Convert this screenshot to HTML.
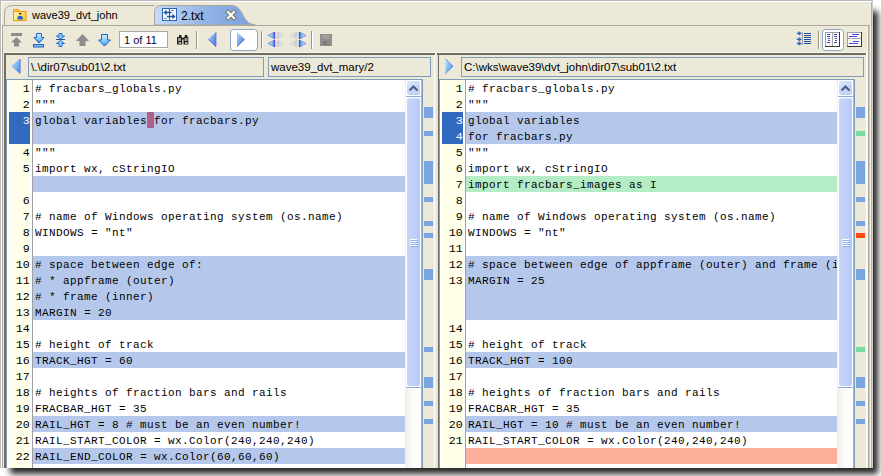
<!DOCTYPE html>
<html><head><meta charset="utf-8">
<style>
html,body{margin:0;padding:0;}
body{width:881px;height:476px;overflow:hidden;background:#fff;position:relative;font-family:"Liberation Sans",sans-serif;}
div{position:absolute;box-sizing:border-box;}
#clip{left:0;top:0;width:873px;height:468px;overflow:hidden;background:#ECE9D8;}
.code{font-family:"Liberation Mono",monospace;font-size:11px;letter-spacing:0.4px;line-height:18.5px;height:16px;white-space:pre;color:#000;width:370px;overflow:hidden;}
.ln{font-family:"Liberation Mono",monospace;font-size:11.667px;line-height:18px;height:16px;width:21px;text-align:right;white-space:pre;}
.fld{border:1px solid #7F9DB9;background:#ECE9D8;font-size:11.5px;color:#000;}
.tabt{font-size:11px;white-space:pre;color:#000;}
.cnt{border:1px solid #A8A8A8;box-shadow:0 1px 0 #fff;background:#fff;font-size:11px;color:#000040;}
.cnt span{position:absolute;left:4px;top:1.5px;white-space:pre;}
.fld span{position:absolute;left:2px;top:3px;white-space:pre;}
</style></head><body>
<div style="left:10px;top:11px;width:868px;height:463px;background:rgba(0,0,0,0.85);filter:blur(3px)"></div>
<div id="clip">
<div style="left:0px;top:0px;width:873px;height:1px;background:#B9B9B9"></div><div style="left:0px;top:0px;width:1px;height:468px;background:#B9B9B9"></div><div style="left:1px;top:1px;width:872px;height:1px;background:#fff"></div><div style="left:1px;top:1px;width:1px;height:467px;background:#fff"></div><div style="left:2px;top:26px;width:1px;height:442px;background:#ACA899"></div><div style="left:868px;top:26px;width:1px;height:442px;background:#ACA899"></div><div style="left:871px;top:2px;width:1px;height:466px;background:#B4B2A8"></div><div style="left:872px;top:1px;width:1px;height:467px;background:#CFCFCF"></div><div style="left:867px;top:26px;width:1px;height:442px;background:#F8F8F4"></div><div style="left:869px;top:26px;width:1px;height:442px;background:#CFCBBB"></div><div style="left:870px;top:26px;width:1px;height:442px;background:#F5F1DE"></div><svg style="position:absolute;left:0;top:0" width="300" height="27">
<defs><linearGradient id="tg" x1="0" y1="0" x2="1" y2="0"><stop offset="0" stop-color="#C6DBF7"/><stop offset="0.55" stop-color="#8FB1E6"/><stop offset="1" stop-color="#79A0E0"/></linearGradient></defs>
<path d="M4.5 25.5 L4.5 13.5 Q4.5 5.5 12.5 5.5 L154.5 5.5" fill="none" stroke="#ACA899" stroke-width="1"/>
<path d="M154.5 25 L154.5 12 Q154.5 5.5 161 5.5 L231 5.5 C237 5.5 239.5 9 242.5 14 C245.5 20 248 24.5 255 24.5 L255 25 Z" fill="url(#tg)" stroke="#ACA899" stroke-width="1"/>
</svg><div style="left:2px;top:25px;width:868px;height:1px;background:#ACA899"></div><div class="tabt" style="left:32px;top:9px">wave39_dvt_john</div><div class="tabt" style="left:181px;top:9px;font-size:12px">2.txt</div><svg style="position:absolute;left:13px;top:9px" width="15" height="13">
<defs><linearGradient id="fg" x1="0" y1="0" x2="1" y2="0.3"><stop offset="0" stop-color="#FFF6C0"/><stop offset="1" stop-color="#FFD03A"/></linearGradient></defs>
<path d="M0.5 0.5 H5.5 L6.5 2 V2.5 H0.5 Z" fill="#FFD860" stroke="#F39A0B" stroke-width="1"/>
<rect x="0.5" y="2.5" width="12.5" height="9" fill="url(#fg)" stroke="#F39A0B" stroke-width="1"/>
<rect x="6" y="4" width="2.2" height="1.6" fill="#1A1A1A"/><rect x="6" y="5.4" width="2.2" height="1.4" fill="#F4C4B4"/>
<path d="M4.5 10.5 V8.5 Q4.5 7 6 7 H8.2 Q9.8 7 9.8 8.5 V10.5 Z" fill="#2464C8"/>
</svg><svg style="position:absolute;left:162px;top:8px" width="15" height="13">
<rect x="0.5" y="0.5" width="14" height="12" fill="#F4F8FF" stroke="#2E64B0" stroke-width="1"/>
<line x1="7.5" y1="0.5" x2="7.5" y2="12.5" stroke="#2E64B0" stroke-width="1"/>
<line x1="9" y1="2.5" x2="12" y2="2.5" stroke="#6A8CC4"/><line x1="2" y1="10.5" x2="5" y2="10.5" stroke="#6A8CC4"/>
<path d="M2.5 4.5 L9.5 4.5" stroke="#1E4D9A" stroke-width="1.5"/><path d="M1.5 4.5 L4.5 1.8 L4.5 7.2 Z" fill="#1E4D9A"/>
<path d="M5 8.5 L12 8.5" stroke="#1E4D9A" stroke-width="1.5"/><path d="M13.5 8.5 L10.5 5.8 L10.5 11.2 Z" fill="#1E4D9A"/>
</svg><svg style="position:absolute;left:225px;top:9px" width="12" height="12">
<path d="M3 3 L9 9 M9 3 L3 9" stroke="#6B6456" stroke-width="3.9" stroke-linecap="square"/>
<path d="M3 3 L9 9 M9 3 L3 9" stroke="#fff" stroke-width="2.3" stroke-linecap="square"/>
</svg>
<div style="left:3px;top:52px;width:865px;height:1px;background:#F6F4EA"></div><div style="left:196px;top:31px;width:1px;height:18px;background:#979488"></div><div style="left:197px;top:31px;width:1px;height:18px;background:#fff"></div><div style="left:261px;top:31px;width:1px;height:18px;background:#979488"></div><div style="left:262px;top:31px;width:1px;height:18px;background:#fff"></div><div style="left:311px;top:31px;width:1px;height:18px;background:#979488"></div><div style="left:312px;top:31px;width:1px;height:18px;background:#fff"></div><div style="left:818px;top:31px;width:1px;height:18px;background:#979488"></div><div style="left:819px;top:31px;width:1px;height:18px;background:#fff"></div>
<svg style="position:absolute;left:0;top:26px" width="881" height="27">
<defs>
<linearGradient id="bl" x1="0" y1="0" x2="0" y2="1"><stop offset="0" stop-color="#D2EEFF"/><stop offset="0.6" stop-color="#80C8FF"/><stop offset="1" stop-color="#2E8CF0"/></linearGradient>
<linearGradient id="tri" x1="0" y1="0" x2="1" y2="1"><stop offset="0" stop-color="#B8DAFB"/><stop offset="1" stop-color="#3A70DA"/></linearGradient>
<linearGradient id="gr" x1="0" y1="0" x2="0" y2="1"><stop offset="0" stop-color="#A8A8A8"/><stop offset="1" stop-color="#808080"/></linearGradient>
</defs>
<!-- icon1 gray to top -->
<rect x="11" y="7" width="11" height="3" fill="#8C8C8C"/>
<path d="M16.5 11 L22 16.5 L19 16.5 L19 20.5 L14 20.5 L14 16.5 L11 16.5 Z" fill="#8C8C8C"/>
<!-- icon2 blue to bottom -->
<path d="M36.5 7.5 L41.5 7.5 L41.5 11.5 L44 11.5 L39 17 L34 11.5 L36.5 11.5 Z" fill="url(#bl)" stroke="#2262C2" stroke-width="1" stroke-linejoin="miter"/>
<rect x="33.5" y="18.5" width="10" height="2.5" fill="#7CC0FF" stroke="#2262C2" stroke-width="1"/>
<!-- icon3 collapse -->
<path d="M59 7.5 H62 V10 H64.5 L60.5 13 L56.5 10 H59 Z" fill="#86CBFF" stroke="#1F6FD8" stroke-width="1"/>
<line x1="56" y1="13.5" x2="65" y2="13.5" stroke="#1F4F96" stroke-width="1"/>
<path d="M60.5 14.5 L64.5 17.5 H62 V20.5 H59 V17.5 H56.5 Z" fill="#86CBFF" stroke="#1F6FD8" stroke-width="1"/>
<!-- icon4 gray up -->
<path d="M82.5 8 L89 15 L85.5 15 L85.5 20 L79.5 20 L79.5 15 L76 15 Z" fill="#8C8C8C"/>
<!-- icon5 blue down -->
<path d="M101.5 8.5 L107.5 8.5 L107.5 14 L110.5 14 L104.5 20 L98.5 14 L101.5 14 Z" fill="url(#bl)" stroke="#2262C2" stroke-width="1" stroke-linejoin="miter"/>
<!-- binoculars -->
<rect x="177" y="11" width="5.2" height="7.5" fill="#1E1E1E"/><rect x="179" y="9" width="2.5" height="3" fill="#1E1E1E"/>
<rect x="183.5" y="11" width="4.8" height="7.5" fill="#1E1E1E"/><rect x="184.8" y="9" width="2.5" height="3" fill="#1E1E1E"/>
<rect x="182" y="12" width="2" height="1.5" fill="#1E1E1E"/>
<rect x="178" y="12" width="3" height="3" fill="#9A9A9A"/><rect x="178.5" y="16" width="2.5" height="2" fill="#A8A8A8"/>
<rect x="184.5" y="12" width="3" height="3" fill="#9A9A9A"/><rect x="185" y="16" width="2.5" height="2" fill="#A8A8A8"/>
<!-- prev -->
<path d="M216 6 L208 13.5 L216 21 Z" fill="url(#tri)"/><path d="M216 6.5 V20.5 L208.5 13.5" fill="none" stroke="#6A68E0" stroke-width="0.8"/>
<!-- next button -->
<rect x="230.5" y="3.5" width="27" height="21" rx="3" fill="#fff" stroke="#8EA6C0" stroke-width="1"/>
<path d="M237 6 L245 13.5 L237 21 Z" fill="url(#tri)"/><path d="M237 20.5 L244.5 13.5" fill="none" stroke="#6A68E0" stroke-width="0.8"/>
<!-- copy left/right -->
<defs>
<linearGradient id="tl" x1="0" y1="0" x2="1" y2="0"><stop offset="0" stop-color="#C8F0FF"/><stop offset="0.6" stop-color="#7CCBF8"/><stop offset="1" stop-color="#2C78E0"/></linearGradient>
<linearGradient id="tr" x1="1" y1="0" x2="0" y2="0"><stop offset="0" stop-color="#C8F0FF"/><stop offset="0.6" stop-color="#7CCBF8"/><stop offset="1" stop-color="#2C78E0"/></linearGradient>
<linearGradient id="gl" x1="0" y1="0" x2="1" y2="0"><stop offset="0" stop-color="#F4F4F4"/><stop offset="1" stop-color="#C8C8C8"/></linearGradient>
<linearGradient id="gr2" x1="1" y1="0" x2="0" y2="0"><stop offset="0" stop-color="#F4F4F4"/><stop offset="1" stop-color="#C8C8C8"/></linearGradient>
</defs>
<g stroke-width="0.7" stroke-linejoin="round">
<path d="M274.8 6 L268 9.45 L274.8 12.9 Z M274.8 14 L268 17.5 L274.8 21 Z" fill="url(#tl)" stroke="#6A6AE8"/>
<path d="M274.3 6 V12.9 M274.3 14 V21" stroke="#5048D8" stroke-width="1"/>
<path d="M277.2 6 L284 9.45 L277.2 12.9 Z M277.2 14 L284 17.5 L277.2 21 Z" fill="url(#gr2)" stroke="#CACACA"/>
<path d="M296.8 6 L290 9.45 L296.8 12.9 Z M296.8 14 L290 17.5 L296.8 21 Z" fill="url(#gl)" stroke="#CACACA"/>
<path d="M299.2 6 L306 9.45 L299.2 12.9 Z M299.2 14 L306 17.5 L299.2 21 Z" fill="url(#tr)" stroke="#6A6AE8"/>
<path d="M299.7 6 V12.9 M299.7 14 V21" stroke="#5048D8" stroke-width="1"/>
</g>
<!-- floppy -->
<rect x="320" y="8" width="12" height="12" fill="#8E8E8E"/>
<rect x="322" y="9" width="8" height="4" fill="#9E9E9E"/>
<rect x="323" y="15" width="6" height="4" fill="#7A7A7A"/><rect x="327" y="16" width="1.5" height="2" fill="#9A9A9A"/>
<!-- line numbers icon -->
<line x1="802.5" y1="6" x2="802.5" y2="19" stroke="#A0A0A0"/>
<g stroke="#1F4F96" stroke-width="1"><line x1="804" y1="7.5" x2="811" y2="7.5"/><line x1="804" y1="9.5" x2="811" y2="9.5"/><line x1="804" y1="11.5" x2="811" y2="11.5"/><line x1="804" y1="13.5" x2="811" y2="13.5"/><line x1="804" y1="15.5" x2="811" y2="15.5"/><line x1="804" y1="17.5" x2="811" y2="17.5"/></g>
<g fill="#2A6CC4"><rect x="796.8" y="6.65" width="4.6" height="1.5"/><rect x="798.6" y="5.60" width="1.6" height="3.6"/><rect x="796.8" y="12.55" width="4.6" height="1.5"/><rect x="798.6" y="11.50" width="1.6" height="3.6"/><rect x="796.8" y="16.75" width="4.6" height="1.5"/><rect x="798.6" y="15.70" width="1.6" height="3.6"/></g>
<!-- side by side button -->
<rect x="822.5" y="3.5" width="21" height="21" rx="3" fill="#fff" stroke="#8EA6C0" stroke-width="1"/>
<rect x="825" y="6" width="15" height="15" fill="#FAFAFA"/>
<rect x="825" y="6" width="15" height="1" fill="#A0A0A0"/><rect x="825" y="6" width="1" height="15" fill="#A0A0A0"/>
<rect x="839" y="6" width="1" height="15" fill="#383838"/><rect x="825" y="20" width="15" height="1" fill="#383838"/>
<rect x="832" y="7" width="1" height="13" fill="#A8A8A8"/>
<g fill="#4848D8"><rect x="827" y="8" width="3" height="1"/><rect x="827" y="10" width="3" height="1"/><rect x="828" y="12" width="2" height="1"/><rect x="828" y="14" width="2" height="1"/><rect x="827" y="16" width="3" height="1"/>
<rect x="834" y="8" width="3" height="1"/><rect x="834" y="10" width="3" height="1"/><rect x="835" y="12" width="2" height="1"/><rect x="835" y="14" width="2" height="1"/><rect x="834" y="16" width="3" height="1"/></g>
<!-- over under -->
<rect x="847" y="6" width="15" height="15" fill="#FAFAFA"/>
<rect x="847" y="6" width="15" height="1" fill="#A0A0A0"/><rect x="847" y="6" width="1" height="15" fill="#A0A0A0"/>
<rect x="861" y="6" width="1" height="15" fill="#383838"/><rect x="847" y="20" width="15" height="1" fill="#383838"/>
<rect x="848" y="12" width="13" height="1" fill="#A8A8A8"/>
<g fill="#4848D8"><rect x="852" y="8" width="7" height="1"/><rect x="849" y="10" width="8" height="1"/><rect x="853" y="15" width="6" height="1"/><rect x="849" y="17" width="9" height="1"/></g>
</svg><div class="cnt" style="left:119px;top:31px;width:49px;height:17px"><span>1 of 11</span></div>
<div style="left:4px;top:53px;width:431px;height:2px;background:#716F64"></div>
<div style="left:5px;top:53px;width:1px;height:420px;background:#716F64"></div>
<div style="left:4px;top:53px;width:1px;height:420px;background:#716F64"></div>
<svg style="position:absolute;left:11px;top:58px" width="11" height="17"><defs><linearGradient id="ga" x1="0" y1="0" x2="1" y2="1"><stop offset="0" stop-color="#C0E6FF"/><stop offset="0.5" stop-color="#7CBDF4"/><stop offset="1" stop-color="#2E7EE0"/></linearGradient></defs><path d="M9 1 L1 8.3 L9 15.6 Z" fill="url(#ga)" stroke="#7A9CE8" stroke-width="0.6"/><path d="M9 1.2 V15.4" stroke="#6A68E0" stroke-width="0.8"/></svg><div class="fld" style="left:28px;top:57px;width:236px;height:20px"><span>\.\dir07\sub01\2.txt</span></div><div class="fld" style="left:268px;top:57px;width:163px;height:20px"><span>wave39_dvt_mary/2</span></div>
<div style="left:6px;top:79px;width:417px;height:1px;background:#7F9DB9"></div>
<div style="left:6px;top:79px;width:1px;height:400px;background:#7F9DB9"></div>
<div style="left:422px;top:79px;width:1px;height:400px;background:#7F9DB9"></div>
<div style="left:7px;top:80px;width:415px;height:400px;background:#fff"></div>
<div style="left:9px;top:80px;width:21px;height:400px;background:#FFFEE8"></div>
<div style="left:32px;top:80px;width:1px;height:400px;background:#A0A0A0"></div>
<div class="ln" style="left:8.7px;top:80px;color:#000">1</div>
<div class="code" style="left:35px;top:80px"># fracbars_globals.py</div>
<div class="ln" style="left:8.7px;top:96px;color:#000">2</div>
<div class="code" style="left:35px;top:96px">&quot;&quot;&quot;</div>
<div style="left:33px;top:112px;width:372px;height:16px;background:#B5C8EC"></div>
<div style="left:9px;top:112px;width:21px;height:16px;background:#316ABF"></div>
<div style="left:147px;top:112px;width:7px;height:16px;background:#B06084"></div>
<div class="ln" style="left:8.7px;top:112px;color:#fff">3</div>
<div class="code" style="left:35px;top:112px">global variables for fracbars.py</div>
<div style="left:33px;top:128px;width:372px;height:16px;background:#B5C8EC"></div>
<div style="left:9px;top:128px;width:21px;height:16px;background:#316ABF"></div>
<div class="ln" style="left:8.7px;top:144px;color:#000">4</div>
<div class="code" style="left:35px;top:144px">&quot;&quot;&quot;</div>
<div class="ln" style="left:8.7px;top:160px;color:#000">5</div>
<div class="code" style="left:35px;top:160px">import wx, cStringIO</div>
<div style="left:33px;top:176px;width:372px;height:16px;background:#B5C8EC"></div>
<div class="ln" style="left:8.7px;top:192px;color:#000">6</div>
<div class="ln" style="left:8.7px;top:208px;color:#000">7</div>
<div class="code" style="left:35px;top:208px"># name of Windows operating system (os.name)</div>
<div class="ln" style="left:8.7px;top:224px;color:#000">8</div>
<div class="code" style="left:35px;top:224px">WINDOWS = &quot;nt&quot;</div>
<div class="ln" style="left:8.7px;top:240px;color:#000">9</div>
<div style="left:33px;top:256px;width:372px;height:16px;background:#B5C8EC"></div>
<div class="ln" style="left:8.7px;top:256px;color:#000">10</div>
<div class="code" style="left:35px;top:256px"># space between edge of:</div>
<div style="left:33px;top:272px;width:372px;height:16px;background:#B5C8EC"></div>
<div class="ln" style="left:8.7px;top:272px;color:#000">11</div>
<div class="code" style="left:35px;top:272px"># * appframe (outer)</div>
<div style="left:33px;top:288px;width:372px;height:16px;background:#B5C8EC"></div>
<div class="ln" style="left:8.7px;top:288px;color:#000">12</div>
<div class="code" style="left:35px;top:288px"># * frame (inner)</div>
<div style="left:33px;top:304px;width:372px;height:16px;background:#B5C8EC"></div>
<div class="ln" style="left:8.7px;top:304px;color:#000">13</div>
<div class="code" style="left:35px;top:304px">MARGIN = 20</div>
<div class="ln" style="left:8.7px;top:320px;color:#000">14</div>
<div class="ln" style="left:8.7px;top:336px;color:#000">15</div>
<div class="code" style="left:35px;top:336px"># height of track</div>
<div style="left:33px;top:352px;width:372px;height:16px;background:#B5C8EC"></div>
<div class="ln" style="left:8.7px;top:352px;color:#000">16</div>
<div class="code" style="left:35px;top:352px">TRACK_HGT = 60</div>
<div class="ln" style="left:8.7px;top:368px;color:#000">17</div>
<div class="ln" style="left:8.7px;top:384px;color:#000">18</div>
<div class="code" style="left:35px;top:384px"># heights of fraction bars and rails</div>
<div class="ln" style="left:8.7px;top:400px;color:#000">19</div>
<div class="code" style="left:35px;top:400px">FRACBAR_HGT = 35</div>
<div style="left:33px;top:416px;width:372px;height:16px;background:#B5C8EC"></div>
<div class="ln" style="left:8.7px;top:416px;color:#000">20</div>
<div class="code" style="left:35px;top:416px">RAIL_HGT = 8 # must be an even number!</div>
<div class="ln" style="left:8.7px;top:432px;color:#000">21</div>
<div class="code" style="left:35px;top:432px">RAIL_START_COLOR = wx.Color(240,240,240)</div>
<div style="left:33px;top:448px;width:372px;height:16px;background:#B5C8EC"></div>
<div class="ln" style="left:8.7px;top:448px;color:#000">22</div>
<div class="code" style="left:35px;top:448px">RAIL_END_COLOR = wx.Color(60,60,60)</div>
<div style="left:405px;top:80px;width:17px;height:400px;background:linear-gradient(90deg,#F1EFE6,#FBFBF8 40%,#FFFFFF)"></div>
<div style="left:406px;top:80px;width:15px;height:18px;background:#fff"></div>
<div style="left:407px;top:81px;width:13px;height:14px;background:linear-gradient(135deg,#DDE7FD,#C3D5FA 60%,#B8CDF8);border-radius:2px"></div>
<svg style="position:absolute;left:408px;top:84px" width="11" height="8"><path d="M1.5 6.5 L5.5 2.5 L9.5 6.5" stroke="#4D6185" stroke-width="2.2" fill="none"/></svg>
<div style="left:406px;top:96px;width:15px;height:1px;background:#8FA8D6;border-radius:1px"></div>
<div style="left:406px;top:97px;width:15px;height:290px;background:#fff"></div>
<div style="left:406px;top:387px;width:15px;height:1px;background:#8FA8D6;border-radius:1px"></div>
<div style="left:407px;top:98px;width:13px;height:288px;background:linear-gradient(90deg,#C8D5F9,#C0D1FA 50%,#B4C8F8);border-radius:2px;box-shadow:inset 0 1px 0 #D8E2FC"></div>
<div style="left:410px;top:239px;width:7px;height:1px;background:#fff"></div>
<div style="left:411px;top:240px;width:7px;height:1px;background:#8CB0F8"></div>
<div style="left:410px;top:241px;width:7px;height:1px;background:#fff"></div>
<div style="left:411px;top:242px;width:7px;height:1px;background:#8CB0F8"></div>
<div style="left:410px;top:243px;width:7px;height:1px;background:#fff"></div>
<div style="left:411px;top:244px;width:7px;height:1px;background:#8CB0F8"></div>
<div style="left:410px;top:245px;width:7px;height:1px;background:#fff"></div>
<div style="left:411px;top:246px;width:7px;height:1px;background:#8CB0F8"></div>
<div style="left:421px;top:80px;width:1px;height:400px;background:#A3B8D2"></div>
<div style="left:424px;top:107px;width:9px;height:11px;background:#7AA5DF"></div>
<div style="left:424px;top:131px;width:9px;height:5px;background:#7AA5DF"></div>
<div style="left:424px;top:161px;width:9px;height:23px;background:#7AA5DF"></div>
<div style="left:424px;top:197px;width:9px;height:5px;background:#7AA5DF"></div>
<div style="left:424px;top:221px;width:9px;height:5px;background:#7AA5DF"></div>
<div style="left:424px;top:233px;width:9px;height:5px;background:#7AA5DF"></div>
<div style="left:424px;top:269px;width:9px;height:11px;background:#7AA5DF"></div>
<div style="left:424px;top:347px;width:9px;height:5px;background:#7AA5DF"></div>
<div style="left:424px;top:377px;width:9px;height:11px;background:#7AA5DF"></div>
<div style="left:424px;top:401px;width:9px;height:5px;background:#7AA5DF"></div>
<div style="left:424px;top:419px;width:9px;height:5px;background:#7AA5DF"></div>
<div style="left:434px;top:55px;width:1px;height:420px;background:#fff"></div>
<div style="left:437px;top:53px;width:429px;height:2px;background:#716F64"></div>
<div style="left:438px;top:53px;width:1px;height:420px;background:#716F64"></div>
<div style="left:437px;top:55px;width:1px;height:420px;background:#E4E1D2"></div>
<svg style="position:absolute;left:444px;top:58px" width="11" height="17"><defs><linearGradient id="gb" x1="0" y1="0" x2="1" y2="1"><stop offset="0" stop-color="#C0E6FF"/><stop offset="0.5" stop-color="#7CBDF4"/><stop offset="1" stop-color="#2E7EE0"/></linearGradient></defs><path d="M1.5 1 L9 8.3 L1.5 15.6 Z" fill="url(#gb)"/><path d="M1.5 1 L9 8.3 L1.5 15.6" fill="none" stroke="#6A68E0" stroke-width="0.8"/></svg><div class="fld" style="left:461px;top:57px;width:403px;height:20px"><span>C:\wks\wave39\dvt_john\dir07\sub01\2.txt</span></div>
<div style="left:439px;top:79px;width:416px;height:1px;background:#7F9DB9"></div>
<div style="left:439px;top:79px;width:1px;height:400px;background:#7F9DB9"></div>
<div style="left:854px;top:79px;width:1px;height:400px;background:#7F9DB9"></div>
<div style="left:440px;top:80px;width:414px;height:400px;background:#fff"></div>
<div style="left:442px;top:80px;width:21px;height:400px;background:#FFFEE8"></div>
<div style="left:465px;top:80px;width:1px;height:400px;background:#A0A0A0"></div>
<div class="ln" style="left:441.7px;top:80px;color:#000">1</div>
<div class="code" style="left:468px;top:80px"># fracbars_globals.py</div>
<div class="ln" style="left:441.7px;top:96px;color:#000">2</div>
<div class="code" style="left:468px;top:96px">&quot;&quot;&quot;</div>
<div style="left:466px;top:112px;width:371px;height:16px;background:#B5C8EC"></div>
<div style="left:442px;top:112px;width:21px;height:16px;background:#316ABF"></div>
<div class="ln" style="left:441.7px;top:112px;color:#fff">3</div>
<div class="code" style="left:468px;top:112px">global variables</div>
<div style="left:466px;top:128px;width:371px;height:16px;background:#B5C8EC"></div>
<div style="left:442px;top:128px;width:21px;height:16px;background:#316ABF"></div>
<div class="ln" style="left:441.7px;top:128px;color:#fff">4</div>
<div class="code" style="left:468px;top:128px">for fracbars.py</div>
<div class="ln" style="left:441.7px;top:144px;color:#000">5</div>
<div class="code" style="left:468px;top:144px">&quot;&quot;&quot;</div>
<div class="ln" style="left:441.7px;top:160px;color:#000">6</div>
<div class="code" style="left:468px;top:160px">import wx, cStringIO</div>
<div style="left:466px;top:176px;width:371px;height:16px;background:#B4ECC6"></div>
<div class="ln" style="left:441.7px;top:176px;color:#000">7</div>
<div class="code" style="left:468px;top:176px">import fracbars_images as I</div>
<div class="ln" style="left:441.7px;top:192px;color:#000">8</div>
<div class="ln" style="left:441.7px;top:208px;color:#000">9</div>
<div class="code" style="left:468px;top:208px"># name of Windows operating system (os.name)</div>
<div class="ln" style="left:441.7px;top:224px;color:#000">10</div>
<div class="code" style="left:468px;top:224px">WINDOWS = &quot;nt&quot;</div>
<div class="ln" style="left:441.7px;top:240px;color:#000">11</div>
<div style="left:466px;top:256px;width:371px;height:16px;background:#B5C8EC"></div>
<div class="ln" style="left:441.7px;top:256px;color:#000">12</div>
<div class="code" style="left:468px;top:256px"># space between edge of appframe (outer) and frame (inner)</div>
<div style="left:466px;top:272px;width:371px;height:16px;background:#B5C8EC"></div>
<div class="ln" style="left:441.7px;top:272px;color:#000">13</div>
<div class="code" style="left:468px;top:272px">MARGIN = 25</div>
<div style="left:466px;top:288px;width:371px;height:16px;background:#B5C8EC"></div>
<div style="left:466px;top:304px;width:371px;height:16px;background:#B5C8EC"></div>
<div class="ln" style="left:441.7px;top:320px;color:#000">14</div>
<div class="ln" style="left:441.7px;top:336px;color:#000">15</div>
<div class="code" style="left:468px;top:336px"># height of track</div>
<div style="left:466px;top:352px;width:371px;height:16px;background:#B5C8EC"></div>
<div class="ln" style="left:441.7px;top:352px;color:#000">16</div>
<div class="code" style="left:468px;top:352px">TRACK_HGT = 100</div>
<div class="ln" style="left:441.7px;top:368px;color:#000">17</div>
<div class="ln" style="left:441.7px;top:384px;color:#000">18</div>
<div class="code" style="left:468px;top:384px"># heights of fraction bars and rails</div>
<div class="ln" style="left:441.7px;top:400px;color:#000">19</div>
<div class="code" style="left:468px;top:400px">FRACBAR_HGT = 35</div>
<div style="left:466px;top:416px;width:371px;height:16px;background:#B5C8EC"></div>
<div class="ln" style="left:441.7px;top:416px;color:#000">20</div>
<div class="code" style="left:468px;top:416px">RAIL_HGT = 10 # must be an even number!</div>
<div class="ln" style="left:441.7px;top:432px;color:#000">21</div>
<div class="code" style="left:468px;top:432px">RAIL_START_COLOR = wx.Color(240,240,240)</div>
<div style="left:466px;top:448px;width:371px;height:16px;background:#FDAF9B"></div>
<div style="left:837px;top:80px;width:17px;height:400px;background:linear-gradient(90deg,#F1EFE6,#FBFBF8 40%,#FFFFFF)"></div>
<div style="left:838px;top:80px;width:15px;height:18px;background:#fff"></div>
<div style="left:839px;top:81px;width:13px;height:14px;background:linear-gradient(135deg,#DDE7FD,#C3D5FA 60%,#B8CDF8);border-radius:2px"></div>
<svg style="position:absolute;left:840px;top:84px" width="11" height="8"><path d="M1.5 6.5 L5.5 2.5 L9.5 6.5" stroke="#4D6185" stroke-width="2.2" fill="none"/></svg>
<div style="left:838px;top:96px;width:15px;height:1px;background:#8FA8D6;border-radius:1px"></div>
<div style="left:838px;top:97px;width:15px;height:290px;background:#fff"></div>
<div style="left:838px;top:387px;width:15px;height:1px;background:#8FA8D6;border-radius:1px"></div>
<div style="left:839px;top:98px;width:13px;height:288px;background:linear-gradient(90deg,#C8D5F9,#C0D1FA 50%,#B4C8F8);border-radius:2px;box-shadow:inset 0 1px 0 #D8E2FC"></div>
<div style="left:842px;top:239px;width:7px;height:1px;background:#fff"></div>
<div style="left:843px;top:240px;width:7px;height:1px;background:#8CB0F8"></div>
<div style="left:842px;top:241px;width:7px;height:1px;background:#fff"></div>
<div style="left:843px;top:242px;width:7px;height:1px;background:#8CB0F8"></div>
<div style="left:842px;top:243px;width:7px;height:1px;background:#fff"></div>
<div style="left:843px;top:244px;width:7px;height:1px;background:#8CB0F8"></div>
<div style="left:842px;top:245px;width:7px;height:1px;background:#fff"></div>
<div style="left:843px;top:246px;width:7px;height:1px;background:#8CB0F8"></div>
<div style="left:853px;top:80px;width:1px;height:400px;background:#A3B8D2"></div>
<div style="left:856px;top:107px;width:9px;height:11px;background:#7AA5DF"></div>
<div style="left:856px;top:131px;width:9px;height:5px;background:#78DCA0"></div>
<div style="left:856px;top:161px;width:9px;height:23px;background:#7AA5DF"></div>
<div style="left:856px;top:197px;width:9px;height:5px;background:#7AA5DF"></div>
<div style="left:856px;top:221px;width:9px;height:5px;background:#7AA5DF"></div>
<div style="left:856px;top:233px;width:9px;height:5px;background:#FF4A14"></div>
<div style="left:856px;top:269px;width:9px;height:11px;background:#7AA5DF"></div>
<div style="left:856px;top:347px;width:9px;height:5px;background:#78DCA0"></div>
<div style="left:856px;top:377px;width:9px;height:11px;background:#7AA5DF"></div>
<div style="left:856px;top:401px;width:9px;height:5px;background:#7AA5DF"></div>
<div style="left:856px;top:419px;width:9px;height:5px;background:#7AA5DF"></div>
<div style="left:866px;top:53px;width:1px;height:420px;background:#fff"></div>
</div>
</body></html>
